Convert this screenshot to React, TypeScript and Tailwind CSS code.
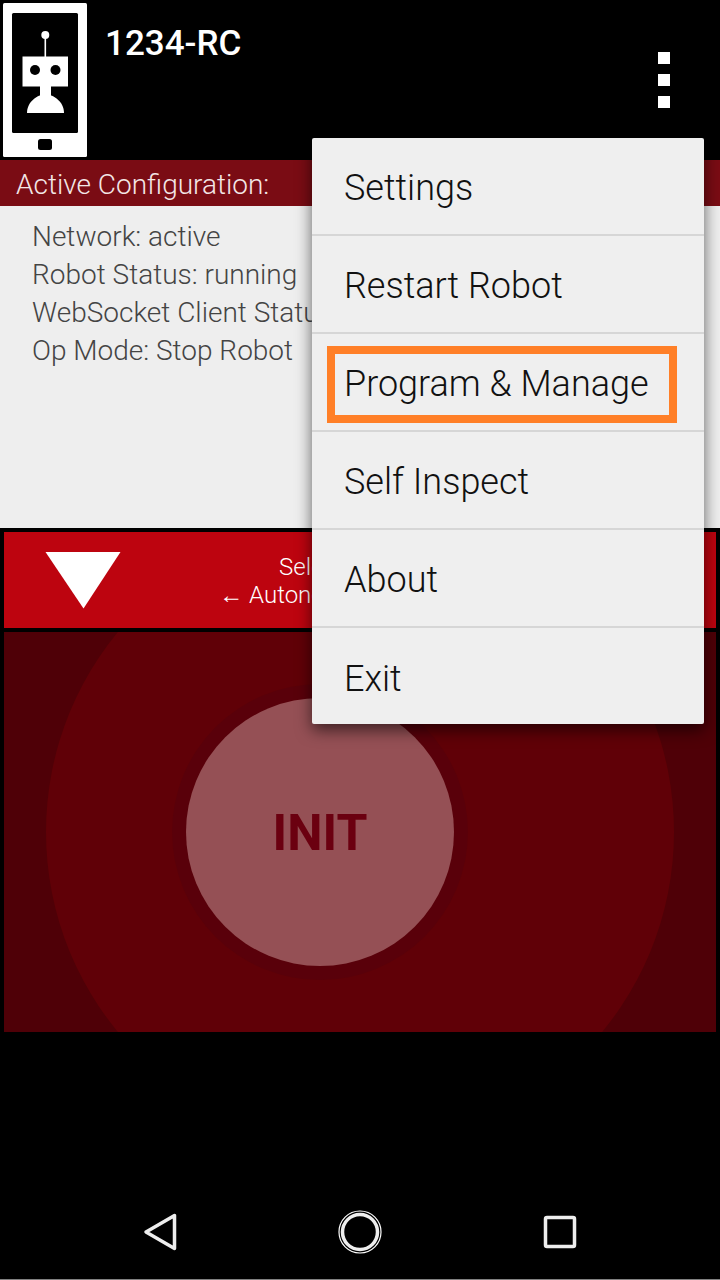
const menuItems = ['Settings', 'Restart Robot', 'Program & Manage', 'Self Inspect', 'About', 'Exit'];

const statusLines = ['Network: active', 'Robot Status: running', 'WebSocket Client Status: connected', 'Op Mode: Stop Robot'];

const RobotLogo = () => (
  <svg width="84" height="154" viewBox="3 3 84 154" className="block">
    <rect x="3" y="3" width="84" height="154" rx="1.5" fill="#fff" />
    <rect x="12" y="13" width="66" height="120" rx="1.5" fill="#000" />
    <rect x="38" y="139" width="14" height="11" rx="2.5" fill="#000" />
    <circle cx="45.3" cy="35" r="4" fill="#fff" />
    <rect x="44.5" y="35" width="1.6" height="22" fill="#fff" />
    <rect x="22.5" y="56.5" width="45.5" height="30" fill="#fff" />
    <circle cx="35" cy="70" r="5" fill="#000" />
    <circle cx="55.5" cy="70" r="5" fill="#000" />
    <rect x="40" y="86" width="11" height="11" fill="#fff" />
    <path d="M27 113C27 102 37 94.500 45.500 94.500C54 94.500 64 102 64 113Z" fill="#fff" />
  </svg>
);

const Menu = () => (
  <div className="absolute left-[312px] top-[138px] w-[392px] h-[586px] bg-[#efefef] rounded-[2px] shadow-[0_6px_16px_rgba(0,0,0,0.6)] flex flex-col">
    {menuItems.map((item, i) => (
      <div
        key={item}
        className={`h-[98px] shrink-0 flex items-center pl-[32px] pt-[4px] text-[36px] font-light text-[#111] relative ${
          i < 5 ? 'border-b-2 border-[#d6d6d6]' : ''
        }`}
      >
        {item}
        {item === 'Program & Manage' && (
          <div className="absolute left-[15px] top-[12px] w-[350px] h-[77px] border-[8px] border-[#ff7f27]" />
        )}
      </div>
    ))}
  </div>
);

const App = () => {
  return (
    <div className="relative w-[720px] h-[1280px] bg-black overflow-hidden flex flex-col font-['Roboto',sans-serif] border-b border-[#808080]">
      <header className="h-[160px] shrink-0 flex items-start pl-[3px] pt-[3px] relative">
        <RobotLogo />
        <h1 className="ml-[18px] mt-[19px] text-[35px] leading-[44px] font-medium text-white">1234-RC</h1>
        <div className="absolute left-[658px] top-[52px] flex flex-col gap-[10px]">
          <div className="w-3 h-3 bg-white" />
          <div className="w-3 h-3 bg-white" />
          <div className="w-3 h-3 bg-white" />
        </div>
      </header>

      <div className="h-[46px] shrink-0 bg-[#7a0c14] pl-4 pt-[3px] flex items-center text-[28px] font-light text-[#f3e6e6]">
        Active Configuration:
      </div>

      <div className="h-[322px] shrink-0 bg-[#eeeeee] pl-8 pt-[12px] text-[28px] leading-[38px] font-light text-[#444] whitespace-nowrap">
        {statusLines.map((line) => (
          <div key={line}>{line}</div>
        ))}
      </div>

      <div className="flex-1 flex flex-col gap-1 px-1 pt-1">
        <div className="h-[96px] bg-[#bd040f] relative flex flex-col items-center justify-center pl-1 pt-[1px] text-[24px] leading-[28px] font-light text-white">
          <svg width="76" height="57" viewBox="0 0 76 57" className="absolute left-[41px] top-[20px]">
            <path d="M0.500 0H75.500L38.500 56.500Z" fill="#fff" />
          </svg>
          <div>Select Op Mode</div>
          <div>← Autonomous &nbsp; TeleOp →</div>
        </div>

        <div className="h-[400px] bg-[#4f0007] relative overflow-hidden">
          <div className="absolute left-[42px] top-[-114px] w-[628px] h-[628px] rounded-full bg-[#600007]" />
          <div className="absolute left-[168px] top-[52px] w-[296px] h-[296px] rounded-full bg-[#59000a]" />
          <div className="absolute left-[182px] top-[66px] w-[268px] h-[268px] rounded-full bg-[#955055] flex items-center justify-center pt-[3px] text-[50px] font-bold text-[#6b0010]">
            INIT
          </div>
        </div>
      </div>

      <nav className="h-[247px] shrink-0 relative">
        <svg width="720" height="89" viewBox="0 1190 720 89" className="absolute left-0 bottom-0">
          <path d="M174.500 1215.500V1248.500L146 1232Z" fill="none" stroke="#eee" strokeWidth="3.500" strokeLinejoin="round" />
          <circle cx="360" cy="1232" r="21" fill="none" stroke="#fff" strokeWidth="1.200" />
          <circle cx="360" cy="1232" r="17.500" fill="none" stroke="#eee" strokeWidth="3.500" />
          <rect x="545.500" y="1217.500" width="29" height="29" rx="1.500" fill="none" stroke="#eee" strokeWidth="3.500" />
        </svg>
      </nav>

      <Menu />
    </div>
  );
};

export default App;
